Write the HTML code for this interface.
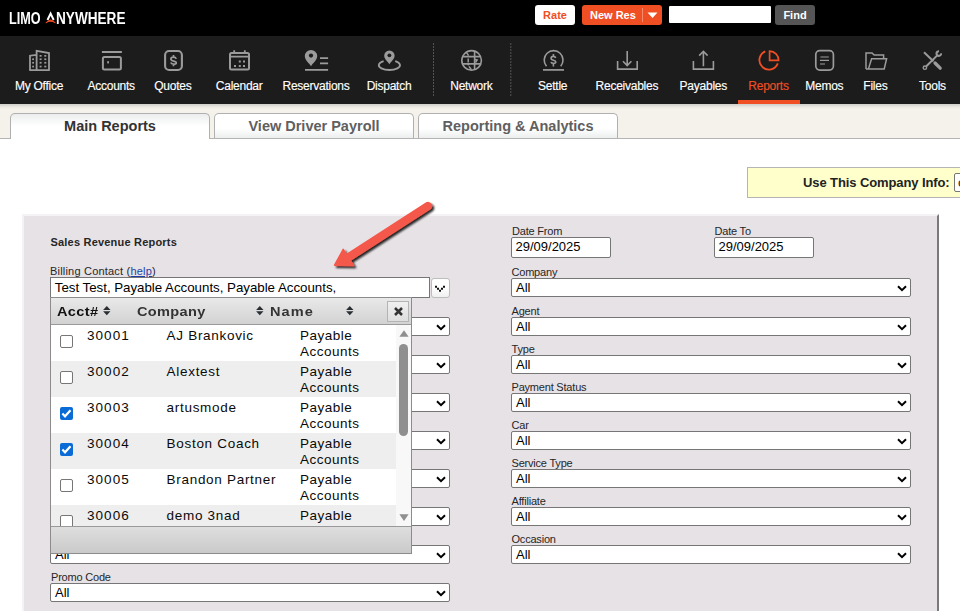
<!DOCTYPE html>
<html><head><meta charset="utf-8"><style>
html,body{margin:0;padding:0;width:960px;height:611px;overflow:hidden;background:#fff;font-family:"Liberation Sans",sans-serif;}
.a{position:absolute}
#hdr{left:0;top:0;width:960px;height:36px;background:#000}
#nav{left:0;top:36px;width:960px;height:68px;background:#1c1c1c}
.ni{position:absolute;width:90px;text-align:center;color:#fff;font-size:12px;letter-spacing:-0.25px;line-height:14px;white-space:nowrap;-webkit-text-stroke:0.15px currentColor}
#tabbar{left:0;top:104px;width:960px;height:34px;background:linear-gradient(#d2d0cb 0,#d8d6d1 1px,#ebe8e2 3px,#f5f2ec 5px,#f5f2ec 100%);border-bottom:1px solid #b4b4b4}
.tab{position:absolute;top:113px;height:24px;border:1px solid #b0b0b0;border-bottom:none;border-radius:5px 5px 0 0;background:linear-gradient(#fff 0,#fff 60%,#eceeee 100%);text-align:center;font:bold 14.5px/25px "Liberation Sans",sans-serif;color:#606060}
.tab.act{height:25px;background:linear-gradient(#eceeee 0,#fff 50%,#fff 100%);color:#333;z-index:2}
.lbl{position:absolute;font-size:11px;color:#262626;line-height:13px;white-space:nowrap}
.sel{position:absolute;height:17px;background:#fff;border:1px solid #767676;border-radius:2px;font-size:13px;line-height:17px;color:#000;box-sizing:content-box}
.sel span{position:absolute;left:4px;top:-0.5px}
.sel svg{position:absolute;right:3.2px;top:5.5px}
.btn{border-radius:3px;text-align:center;font:bold 11px/20px "Liberation Sans",sans-serif}
.hd{position:absolute;top:5.5px;font:bold 13px/16px "Liberation Sans",sans-serif;color:#333;letter-spacing:0.3px;white-space:nowrap;transform:scaleX(1.12);transform-origin:0 0}
.row{position:absolute;left:0;width:345px;height:36px;font-size:13.5px;line-height:15.5px;color:#0a0a0a;letter-spacing:0.8px}
.row .c1,.row .c2,.row .c3{position:absolute;top:3px;white-space:nowrap}
.row .c1{left:36px;letter-spacing:1.05px}.row .c2{left:115.6px;letter-spacing:0.7px}.row .c3{left:249px;letter-spacing:0.48px}
.cb{position:absolute;left:9px;top:10px;width:11px;height:11px;border:1px solid #767676;border-radius:2px;background:#fff}
.cb.on{width:13px;height:13px;border:none;background:#0b6bd6}
.cb svg{position:absolute;left:0;top:0}
</style></head><body>
<div id="hdr" class="a"></div>
<div class="a" style="left:9px;top:7.5px;height:22px;font:bold 16px/22px 'Liberation Sans',sans-serif;color:#fff;white-space:nowrap;transform:scaleX(0.79);transform-origin:0 0">LIMO</div>
<div class="a" style="left:56px;top:7.5px;height:22px;font:bold 16px/22px 'Liberation Sans',sans-serif;color:#fff;white-space:nowrap;transform:scaleX(0.85);transform-origin:0 0">NYWHERE</div>
<svg class="a" style="left:0;top:0" width="960" height="36"><path d="M47.5 20 L50.6 13.6 L53.7 20" stroke="#fff" stroke-width="2" fill="none" stroke-linejoin="miter"/><path d="M45.3 23 Q50.6 15.8 55.9 23 L55 23.3 Q50.6 20.4 46.2 23.3 Z" fill="#f04e23"/></svg>
<div class="a btn" style="left:535px;top:5px;width:40px;height:20px;background:#fff;color:#f04e23">Rate</div>
<div class="a btn" style="left:582px;top:5px;width:80px;height:20px;background:#f04e23;color:#fff"><span style="position:absolute;left:8px;top:0">New Res</span><span style="position:absolute;left:60px;top:3px;width:1px;height:14px;background:#f58a6c"></span><svg style="position:absolute;left:65px;top:7px" width="11" height="7"><path d="M0.5 0.5 H10.5 L5.5 6 Z" fill="#fff"/></svg></div>
<div class="a" style="left:669px;top:5.5px;width:101.5px;height:17px;background:#fff;border-radius:1px"></div>
<div class="a btn" style="left:775px;top:5px;width:40px;height:20px;background:#555;color:#fff">Find</div>
<div id="nav" class="a"></div>
<svg class="a" style="left:0;top:0" width="960" height="104" fill="none" stroke="#9b9b9b" stroke-width="1.8">
<g id="office"><path d="M30 70.1 V55.7 L36.6 54.9 M36.6 70.1 V50.8 L49 53 V70.1 M29.2 70.1 H49.8"/>
<g fill="#9b9b9b" stroke="none"><rect x="32.2" y="58.4" width="1.8" height="1.7"/><rect x="32.2" y="61.9" width="1.8" height="1.7"/><rect x="32.2" y="65.7" width="1.8" height="1.7"/>
<rect x="39.6" y="55" width="2" height="1.7"/><rect x="44.3" y="55" width="2" height="1.7"/><rect x="39.6" y="58.4" width="2" height="1.7"/><rect x="44.3" y="58.4" width="2" height="1.7"/><rect x="39.6" y="61.9" width="2" height="1.7"/><rect x="44.3" y="61.9" width="2" height="1.7"/><rect x="39.6" y="65.7" width="2" height="1.7"/><rect x="44.3" y="65.7" width="2" height="1.7"/></g></g>
<g id="accounts"><path d="M101.9 52 H121.9" stroke-width="2"/><rect x="102.9" y="57" width="18" height="12.6" rx="1.5" stroke-width="2"/><rect x="107.2" y="61.2" width="1.8" height="2.2" fill="#9b9b9b" stroke="none"/></g>
<g id="quotes"><rect x="165.1" y="51" width="16.8" height="19" rx="4" stroke-width="2.1"/><path d="M176.2 58.9 C175.9 57.8 175 57.1 173.5 57.1 C171.9 57.1 170.9 57.9 170.9 59 C170.9 62 176.3 60.2 176.3 62.9 C176.3 63.9 175.2 64.1 173.5 64.1 C172 64.1 171.1 63.6 170.8 62.6 M173.5 54.9 V57.1 M173.5 64.1 V66.2" stroke-width="1.7"/></g>
<g id="calendar"><rect x="230" y="52.9" width="19" height="16.7" rx="1.5" stroke-width="2"/><path d="M230 56.6 H249 M234.2 50.2 V54 M244.8 50.2 V54" stroke-width="1.8"/>
<g fill="#9b9b9b" stroke="none"><rect x="238.8" y="60.5" width="2" height="2"/><rect x="243" y="60.5" width="2" height="2"/><rect x="234" y="65" width="2" height="2"/><rect x="238.8" y="65" width="2" height="2"/><rect x="243" y="65" width="2" height="2"/></g></g>
<g id="reservations"><path d="M311 66.2 C308.5 62.8 304.8 59.8 304.8 56.1 A6.2 6.2 0 0 1 317.2 56.1 C317.2 59.8 313.5 62.8 311 66.2 Z" fill="#9b9b9b" stroke="none"/><circle cx="311" cy="55.6" r="2.1" fill="#1c1c1c" stroke="none"/>
<path d="M320 58.2 H328.1 M320 63.3 H328.1 M305 69.8 H328.1" stroke-width="1.7"/></g>
<g id="dispatch"><path d="M389.4 64.2 C387.3 61.4 384.2 59 384.2 55.6 A5.2 5.2 0 0 1 394.6 55.6 C394.6 59 391.5 61.4 389.4 64.2 Z" fill="#9b9b9b" stroke="none"/><circle cx="389.4" cy="55.3" r="1.9" fill="#1c1c1c" stroke="none"/>
<path d="M383.6 61.2 A10.6 4.8 0 1 0 395.2 61.2" stroke-width="1.8"/></g>
<path d="M433.5 43.5 V96 M510.8 43.5 V96" stroke="#8a8a8a" stroke-width="1" stroke-dasharray="1 2"/>
<g id="network" stroke-width="1.6"><circle cx="471.6" cy="60.4" r="9.8"/><path d="M462.3 56.6 H480.9 M462.3 63.9 H480.9 M474.6 50.8 V70"/>
<path d="M466.6 52.6 L468.6 55.6 M468.2 58.4 V62.6 M469 66.4 L471.4 69.8 M474.4 59.3 L477.1 59.9 L475.5 62.5" stroke-width="1.5"/><circle cx="468.3" cy="64.6" r="1" fill="#9b9b9b" stroke="none"/></g>
<g id="settle"><path d="M546.5 66.2 A9.4 9.4 0 1 1 560.7 66.2" stroke-width="1.6"/><path d="M543 69.9 H564" stroke-width="1.7"/><path d="M555.7 58 C555.4 57 554.6 56.4 553.4 56.4 C552 56.4 551.1 57.2 551.1 58.3 C551.1 61.1 555.8 59.3 555.8 62 C555.8 63 554.9 63.3 553.4 63.3 C552.1 63.3 551.3 62.9 551 61.9 M553.4 54 V56.4 M553.4 63.3 V66.6" stroke-width="1.6"/></g>
<g id="receivables"><path d="M617.6 61 V69.1 H637.2 V61 M627.2 51 V65 M623 61.2 L627.2 65.5 L631.4 61.2" stroke-width="1.6"/></g>
<g id="payables"><path d="M693.4 61 V69.1 H713.4 V61 M703.4 66.2 V51.8 M699.2 55.6 L703.4 51.3 L707.6 55.6" stroke-width="1.6"/></g>
<g id="reports" stroke="#f04e23" stroke-width="1.8"><path d="M765.3 51.3 A9.5 9.5 0 1 0 777.8 63.4"/><path d="M769.6 51.1 V60.4 H778.6 A9.1 9.1 0 0 0 769.6 51.1 Z" stroke-width="1.7"/></g>
<g id="memos"><rect x="815.8" y="50.6" width="17.6" height="19.5" rx="4" stroke-width="1.7"/><path d="M820.4 57 H828.8 M820 60.4 H829 M820 64 H825" stroke-width="1.1"/></g>
<g id="files" stroke-width="1.5"><path d="M866 69 V52.9 H872 L874.2 55.1 H883.6 V58.4"/><path d="M866 69 H884.2 L886.6 58.7 H871.6 L868.6 68.4"/></g>
<g id="tools"><path d="M924 52.2 L933.4 61.2" stroke-width="2"/><path d="M935 63 L940.2 68.2" stroke-width="3.3" stroke-linecap="round"/><path d="M926.3 66.3 L937 55.6" stroke-width="2"/><circle cx="924.9" cy="67.7" r="1.7" stroke-width="1.4"/><path d="M939 51.3 A2.3 2.3 0 1 0 941.1 53.4" stroke-width="2.1"/></g>
</svg>
<div class="a" style="left:738px;top:100px;width:61.5px;height:4px;background:#f04e23"></div>
<div class="ni" style="left:-6px;top:78.6px">My Office</div><div class="ni" style="left:66.2px;top:78.6px">Accounts</div><div class="ni" style="left:127.9px;top:78.6px">Quotes</div><div class="ni" style="left:194.2px;top:78.6px">Calendar</div><div class="ni" style="left:271px;top:78.6px">Reservations</div><div class="ni" style="left:344px;top:78.6px">Dispatch</div><div class="ni" style="left:426.4px;top:78.6px">Network</div><div class="ni" style="left:507.70000000000005px;top:78.6px">Settle</div><div class="ni" style="left:581.9px;top:78.6px">Receivables</div><div class="ni" style="left:658.3px;top:78.6px">Payables</div><div class="ni" style="left:723.5px;top:78.6px;color:#f04e23">Reports</div><div class="ni" style="left:779.3px;top:78.6px">Memos</div><div class="ni" style="left:830.4px;top:78.6px">Files</div><div class="ni" style="left:887.5px;top:78.6px">Tools</div>
<div id="tabbar" class="a"></div>
<div class="tab act" style="left:10px;width:198px">Main Reports</div>
<div class="tab" style="left:214px;width:198px">View Driver Payroll</div>
<div class="tab" style="left:418px;width:198px">Reporting &amp; Analytics</div>
<div class="a" style="left:747px;top:167px;width:220px;height:29px;background:#ffffcc;border:1px solid #b5b5b5"></div>
<div class="a" style="left:803px;top:175px;font:bold 13px/16px 'Liberation Sans',sans-serif;color:#222;white-space:nowrap;letter-spacing:-0.1px">Use This Company Info:</div>
<div class="a" style="left:954px;top:173px;width:20px;height:17px;background:#fff;border:1px solid #767676;border-radius:2px;overflow:hidden;font:13px/17px 'Liberation Sans',sans-serif;color:#222"><span style="position:absolute;left:3px;top:0">c</span></div>
<div class="a" id="panel" style="left:22px;top:214px;width:913px;height:420px;background:#e7e2e6;border-style:solid;border-width:2px;border-color:#f4f2f4 #7a7a7a #7a7a7a #f4f2f4"></div>
<div class="lbl" style="left:50.5px;top:236px;font-weight:bold;letter-spacing:0.2px">Sales Revenue Reports</div>
<div class="lbl" style="left:50px;top:265px;letter-spacing:0.2px">Billing Contact (<span style="color:#1b3fa6;text-decoration:underline">help</span>)</div>
<div class="lbl" style="left:512px;top:225px;letter-spacing:-0.2px">Date From</div>
<div class="lbl" style="left:714.5px;top:225px;letter-spacing:-0.2px">Date To</div>
<div class="sel" style="left:511px;top:237px;width:98px;height:19px;line-height:18px"><span style="left:3.5px">29/09/2025</span></div>
<div class="sel" style="left:714px;top:237px;width:98px;height:19px;line-height:18px"><span style="left:3.5px">29/09/2025</span></div>
<div class="lbl" style="left:511.5px;top:266px;letter-spacing:-0.2px">Company</div>
<div class="sel" style="left:511px;top:278px;width:398px"><span>All</span><svg width="10" height="7" viewBox="0 0 10 7"><path d="M1 1.2 L5 5.1 L9 1.2" stroke="#000" stroke-width="2" fill="none"/></svg></div>
<div class="lbl" style="left:511.5px;top:305px;letter-spacing:-0.2px">Agent</div>
<div class="sel" style="left:511px;top:317px;width:398px"><span>All</span><svg width="10" height="7" viewBox="0 0 10 7"><path d="M1 1.2 L5 5.1 L9 1.2" stroke="#000" stroke-width="2" fill="none"/></svg></div>
<div class="lbl" style="left:511.5px;top:343px;letter-spacing:-0.2px">Type</div>
<div class="sel" style="left:511px;top:355px;width:398px"><span>All</span><svg width="10" height="7" viewBox="0 0 10 7"><path d="M1 1.2 L5 5.1 L9 1.2" stroke="#000" stroke-width="2" fill="none"/></svg></div>
<div class="lbl" style="left:511.5px;top:381px;letter-spacing:-0.2px">Payment Status</div>
<div class="sel" style="left:511px;top:393px;width:398px"><span>All</span><svg width="10" height="7" viewBox="0 0 10 7"><path d="M1 1.2 L5 5.1 L9 1.2" stroke="#000" stroke-width="2" fill="none"/></svg></div>
<div class="lbl" style="left:511.5px;top:419px;letter-spacing:-0.2px">Car</div>
<div class="sel" style="left:511px;top:431px;width:398px"><span>All</span><svg width="10" height="7" viewBox="0 0 10 7"><path d="M1 1.2 L5 5.1 L9 1.2" stroke="#000" stroke-width="2" fill="none"/></svg></div>
<div class="lbl" style="left:511.5px;top:457px;letter-spacing:-0.2px">Service Type</div>
<div class="sel" style="left:511px;top:469px;width:398px"><span>All</span><svg width="10" height="7" viewBox="0 0 10 7"><path d="M1 1.2 L5 5.1 L9 1.2" stroke="#000" stroke-width="2" fill="none"/></svg></div>
<div class="lbl" style="left:511.5px;top:495px;letter-spacing:-0.2px">Affiliate</div>
<div class="sel" style="left:511px;top:507px;width:398px"><span>All</span><svg width="10" height="7" viewBox="0 0 10 7"><path d="M1 1.2 L5 5.1 L9 1.2" stroke="#000" stroke-width="2" fill="none"/></svg></div>
<div class="lbl" style="left:511.5px;top:533px;letter-spacing:-0.2px">Occasion</div>
<div class="sel" style="left:511px;top:545px;width:398px"><span>All</span><svg width="10" height="7" viewBox="0 0 10 7"><path d="M1 1.2 L5 5.1 L9 1.2" stroke="#000" stroke-width="2" fill="none"/></svg></div>
<div class="sel" style="left:50px;top:317px;width:398px"><span>All</span><svg width="10" height="7" viewBox="0 0 10 7"><path d="M1 1.2 L5 5.1 L9 1.2" stroke="#000" stroke-width="2" fill="none"/></svg></div>
<div class="sel" style="left:50px;top:355px;width:398px"><span>All</span><svg width="10" height="7" viewBox="0 0 10 7"><path d="M1 1.2 L5 5.1 L9 1.2" stroke="#000" stroke-width="2" fill="none"/></svg></div>
<div class="sel" style="left:50px;top:393px;width:398px"><span>All</span><svg width="10" height="7" viewBox="0 0 10 7"><path d="M1 1.2 L5 5.1 L9 1.2" stroke="#000" stroke-width="2" fill="none"/></svg></div>
<div class="sel" style="left:50px;top:431px;width:398px"><span>All</span><svg width="10" height="7" viewBox="0 0 10 7"><path d="M1 1.2 L5 5.1 L9 1.2" stroke="#000" stroke-width="2" fill="none"/></svg></div>
<div class="sel" style="left:50px;top:469px;width:398px"><span>All</span><svg width="10" height="7" viewBox="0 0 10 7"><path d="M1 1.2 L5 5.1 L9 1.2" stroke="#000" stroke-width="2" fill="none"/></svg></div>
<div class="sel" style="left:50px;top:507px;width:398px"><span>All</span><svg width="10" height="7" viewBox="0 0 10 7"><path d="M1 1.2 L5 5.1 L9 1.2" stroke="#000" stroke-width="2" fill="none"/></svg></div>
<div class="sel" style="left:50px;top:545px;width:398px"><span>All</span><svg width="10" height="7" viewBox="0 0 10 7"><path d="M1 1.2 L5 5.1 L9 1.2" stroke="#000" stroke-width="2" fill="none"/></svg></div>
<div class="lbl" style="left:51px;top:571px;letter-spacing:-0.2px">Promo Code</div>
<div class="sel" style="left:50px;top:583px;width:398px"><span>All</span><svg width="10" height="7" viewBox="0 0 10 7"><path d="M1 1.2 L5 5.1 L9 1.2" stroke="#000" stroke-width="2" fill="none"/></svg></div>
<div class="sel" style="left:50px;top:277px;width:378px;height:19px;line-height:19px;border-radius:0"><span style="left:3.8px;top:-0.3px;font-size:13.33px;letter-spacing:-0.03px">Test Test, Payable Accounts, Payable Accounts,</span></div>
<div class="a" style="left:431px;top:278px;width:17px;height:18px;border:1px solid #bdbdbd;border-radius:3px;background:linear-gradient(#fff 40%,#f0f0f0)"><svg style="position:absolute;left:-1px;top:-1px" width="19" height="20"><path d="M4 7.8h2v2h-2zM6 9.8h2v2h-2zM8 11.8h2v2h-2zM10 9.8h2v2h-2zM12 7.8h2v2h-2z" fill="#111"/></svg></div>
<div class="a" id="popup" style="left:50px;top:297px;width:360px;height:255px;border:1px solid #8c8c8c;background:#fff;overflow:hidden;z-index:5">
<div class="a" style="left:0;top:0;width:360px;height:26px;background:linear-gradient(#e9e9e9,#d2d2d2);border-bottom:1px solid #9a9a9a">
<div class="hd" style="left:6px;color:#111">Acct#</div><svg width="8" height="10" viewBox="0 0 8 10" style="position:absolute;top:7.9px;left:51.8px"><path d="M3.8 0 L7.5 4 H0.1 Z M3.8 9.2 L7.5 5.3 H0.1 Z" fill="#2a2f33"/></svg>
<div class="hd" style="left:86px">Company</div><svg width="8" height="10" viewBox="0 0 8 10" style="position:absolute;top:7.9px;left:205px"><path d="M3.8 0 L7.5 4 H0.1 Z M3.8 9.2 L7.5 5.3 H0.1 Z" fill="#2a2f33"/></svg>
<div class="hd" style="left:219px;letter-spacing:0.95px">Name</div><svg width="8" height="10" viewBox="0 0 8 10" style="position:absolute;top:7.9px;left:295px"><path d="M3.8 0 L7.5 4 H0.1 Z M3.8 9.2 L7.5 5.3 H0.1 Z" fill="#2a2f33"/></svg>
<div class="a" style="left:336px;top:3px;width:20px;height:19px;border:1px solid #b4b4b4;background:linear-gradient(#f0f0f0,#dedede)"><svg style="position:absolute;left:5px;top:4px" width="11" height="11" viewBox="0 0 11 11"><path d="M2 2 L9 9 M9 2 L2 9" stroke="#333" stroke-width="2.5"/></svg></div>
</div>
<div class="a" style="left:0;top:27px;width:360px;height:201px;overflow:hidden">
<div class="row" style="top:0px;background:#fff"><div class="cb"></div><div class="c1">30001</div><div class="c2">AJ Brankovic</div><div class="c3">Payable<br>Accounts</div></div>
<div class="row" style="top:36px;background:#eeeeee"><div class="cb"></div><div class="c1">30002</div><div class="c2">Alextest</div><div class="c3">Payable<br>Accounts</div></div>
<div class="row" style="top:72px;background:#fff"><div class="cb on"><svg width="13" height="13" viewBox="0 0 13 13"><path d="M2.4 6.6 L5 9.3 L10.5 3.2" stroke="#fff" stroke-width="2.2" fill="none"/></svg></div><div class="c1">30003</div><div class="c2">artusmode</div><div class="c3">Payable<br>Accounts</div></div>
<div class="row" style="top:108px;background:#eeeeee"><div class="cb on"><svg width="13" height="13" viewBox="0 0 13 13"><path d="M2.4 6.6 L5 9.3 L10.5 3.2" stroke="#fff" stroke-width="2.2" fill="none"/></svg></div><div class="c1">30004</div><div class="c2">Boston Coach</div><div class="c3">Payable<br>Accounts</div></div>
<div class="row" style="top:144px;background:#fff"><div class="cb"></div><div class="c1">30005</div><div class="c2">Brandon Partner</div><div class="c3">Payable<br>Accounts</div></div>
<div class="row" style="top:180px;background:#eeeeee"><div class="cb"></div><div class="c1">30006</div><div class="c2">demo 3nad</div><div class="c3">Payable<br>Accounts</div></div>

<div class="a" style="left:345px;top:0;width:15px;height:201px;background:#f8f8f8"></div>
<svg class="a" style="left:348px;top:5.2px" width="10" height="8"><path d="M5 0.3 L9.6 6.8 H0.4 Z" fill="#8f8f8f"/></svg>
<div class="a" style="left:348px;top:19px;width:9px;height:92px;border-radius:4.5px;background:#8f8f8f"></div>
<svg class="a" style="left:348px;top:189px" width="10" height="8"><path d="M0.4 0.3 H9.6 L5 7 Z" fill="#8f8f8f"/></svg>
</div>
<div class="a" style="left:0;top:228px;width:360px;height:27px;border-top:1px solid #999;background:linear-gradient(#dedede,#c9c9c9)"></div>
</div>
<svg class="a" style="left:0;top:0;z-index:6" width="960" height="611">
<defs><filter id="sh" x="-20%" y="-20%" width="140%" height="140%"><feGaussianBlur in="SourceAlpha" stdDeviation="1.3"/><feOffset dx="1.5" dy="2" result="b"/><feComponentTransfer><feFuncA type="linear" slope="0.85"/></feComponentTransfer><feMerge><feMergeNode/><feMergeNode in="SourceGraphic"/></feMerge></filter></defs>
<g filter="url(#sh)" fill="#f4594b" stroke="#f4594b"><path d="M428 206 L349 257" stroke-width="8.4" stroke-linecap="round"/><path d="M334.6 265.2 L343.2 249.4 L353.6 265.6 Z" stroke-width="1.5" stroke-linejoin="round"/></g>
</svg>
</body></html>
